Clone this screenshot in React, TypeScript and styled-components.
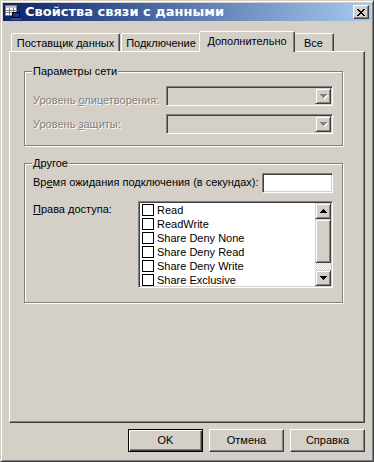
import styled, { createGlobalStyle } from "styled-components";

const FACE = "#d4d0c8";
const SHADOW = "#808080";
const DARK = "#404040";

const GlobalStyle = createGlobalStyle`
  html, body {
    margin: 0;
    padding: 0;
    background: ${FACE};
  }
  body {
    font-family: "Liberation Sans", Arial, sans-serif;
    font-size: 11px;
    line-height: 13px;
    color: #000;
  }
  * {
    box-sizing: border-box;
  }
`;

const TABS = [
  { label: "Поставщик данных", width: 109, gap: 1 },
  { label: "Подключение", width: 80, gap: 0 },
  { label: "Дополнительно", width: 96, gap: -2, active: true },
  { label: "Все", width: 41, gap: 0 },
];

const RIGHTS = [
  "Read",
  "ReadWrite",
  "Share Deny None",
  "Share Deny Read",
  "Share Deny Write",
  "Share Exclusive",
];

const DOWN = "M0 0h7v1H0zM1 1h5v1H1zM2 2h3v1H2zM3 3h1v1H3z";
const UP = "M3 0h1v1H3zM2 1h3v1H2zM1 2h5v1H1zM0 3h7v1H0z";

const TitleIcon = () => (
  <svg width="16" height="16" viewBox="0 0 16 16" shapeRendering="crispEdges">
    <rect x="0" y="1" width="12" height="11" fill="#808080" />
    <rect x="1" y="2" width="10" height="9" fill="#fff" />
    <rect x="1" y="2" width="10" height="2" fill="#c0c0c0" />
    <path d="M1 6h10M1 8h10M4 4v7M8 4v7" stroke="#808080" />
    <rect x="7" y="8" width="8" height="6" fill="#000" />
    <rect x="8" y="9" width="6" height="4" fill="#1030c0" />
    <rect x="6" y="14" width="10" height="2" fill="#505050" />
  </svg>
);

const CloseGlyph = () => (
  <svg width="8" height="7" viewBox="0 0 8 7" shapeRendering="crispEdges">
    <path
      d="M0 0h2v1h1v1h2V1h1V0h2v1H7v1H6v1H5v1h1v1h1v1h1v1H6V6H5V5H3v1H2v1H0V6h1V5h1V4h1V3H2V2H1V1H0z"
      fill="#000"
    />
  </svg>
);

const Arrow = ({ up }: { up?: boolean }) => (
  <svg width="7" height="4" viewBox="0 0 7 4" shapeRendering="crispEdges">
    <path d={up ? UP : DOWN} fill="#000" />
  </svg>
);

// greyed-out arrow: white copy shifted by one pixel under a grey one
const DisabledArrow = () => (
  <svg width="8" height="5" viewBox="0 0 8 5" shapeRendering="crispEdges">
    <path d={DOWN} fill="#fff" transform="translate(1 1)" />
    <path d={DOWN} fill={SHADOW} />
  </svg>
);

const App = () => {
  return (
    <>
      <GlobalStyle />
      <Window>
        <TitleBar>
          <TitleIcon />
          <TitleText>Свойства связи с данными</TitleText>
          <CloseButton>
            <CloseGlyph />
          </CloseButton>
        </TitleBar>

        <Body>
          <TabStrip>
            {TABS.map((t) => (
              <Tab key={t.label} $width={t.width} $gap={t.gap} $active={t.active}>
                {t.label}
              </Tab>
            ))}
          </TabStrip>

          <Panel>
            <Group $height={75}>
              <Caption>Параметры сети</Caption>
              <Row $mt={8}>
                <Label $width={133} $dy={8} $disabled>
                  Уровень <u>о</u>лицетворения:
                </Label>
                <Combo>
                  <DropButton>
                    <DisabledArrow />
                  </DropButton>
                </Combo>
              </Row>
              <Row $mt={7}>
                <Label $width={133} $dy={4} $disabled>
                  Уровень <u>з</u>ащиты:
                </Label>
                <Combo>
                  <DropButton>
                    <DisabledArrow />
                  </DropButton>
                </Combo>
              </Row>
            </Group>

            <Group $height={140} $mt={17}>
              <Caption>Другое</Caption>
              <Row $mt={3}>
                <Label $dy={3}>
                  Вр<u>е</u>мя ожидания подключения (в секундах):
                </Label>
                <TextBox />
              </Row>
              <Row $mt={8}>
                <Label $width={105} $dy={2}>
                  <u>П</u>рава доступа:
                </Label>
                <ListBox>
                  <Items>
                    {RIGHTS.map((r) => (
                      <Item key={r}>
                        <CheckBox />
                        {r}
                      </Item>
                    ))}
                  </Items>
                  <ScrollBar>
                    <ScrollButton>
                      <Arrow up />
                    </ScrollButton>
                    <Thumb />
                    <Track />
                    <ScrollButton>
                      <Arrow />
                    </ScrollButton>
                  </ScrollBar>
                </ListBox>
              </Row>
            </Group>
          </Panel>

          <ButtonRow>
            <PushButton $default>OK</PushButton>
            <PushButton>Отмена</PushButton>
            <PushButton>Справка</PushButton>
          </ButtonRow>
        </Body>
      </Window>
    </>
  );
};

const Window = styled.div`
  width: 374px;
  height: 462px;
  display: flex;
  flex-direction: column;
  padding: 2px;
  background: ${FACE};
  border: 1px solid;
  border-color: ${FACE} ${DARK} ${DARK} ${FACE};
  box-shadow: inset 1px 1px 0 #fff, inset -1px -1px 0 ${SHADOW};
`;

const TitleBar = styled.div`
  height: 18px;
  flex-shrink: 0;
  display: flex;
  align-items: center;
  padding: 0 2px;
  background: linear-gradient(to right, #0a246a, #a6caf0);
`;

const TitleText = styled.div`
  flex: 1;
  margin-left: 4px;
  font-family: "DejaVu Sans", Verdana, sans-serif;
  font-weight: 700;
  font-size: 13px;
  line-height: 16px;
  color: #fff;
  white-space: nowrap;
`;

const CloseButton = styled.div`
  width: 16px;
  height: 14px;
  display: flex;
  align-items: center;
  justify-content: center;
  background: ${FACE};
  border: 1px solid;
  border-color: #fff ${DARK} ${DARK} #fff;
  box-shadow: inset -1px -1px 0 ${SHADOW};
`;

const Body = styled.div`
  flex: 1;
  display: flex;
  flex-direction: column;
  padding: 10px 6px 7px;
`;

const TabStrip = styled.div`
  height: 20px;
  flex-shrink: 0;
  display: flex;
  align-items: flex-end;
  padding-left: 2px;
`;

const Tab = styled.div<{ $width: number; $gap: number; $active?: boolean }>`
  position: relative;
  z-index: ${({ $active }) => ($active ? 1 : 0)};
  width: ${({ $width }) => $width}px;
  height: ${({ $active }) => ($active ? 21 : 18)}px;
  margin: 0 ${({ $gap }) => $gap}px ${({ $active }) => ($active ? -1 : 0)}px
    ${({ $active }) => ($active ? -2 : 0)}px;
  padding-top: 3px;
  text-align: center;
  white-space: nowrap;
  background: ${FACE};
  border: 1px solid;
  border-bottom: none;
  border-color: #fff ${DARK} transparent #fff;
  border-radius: 2px 2px 0 0;
  box-shadow: inset -1px 0 0 ${SHADOW};
`;

const Panel = styled.div`
  flex: 1;
  display: flex;
  flex-direction: column;
  align-items: flex-start;
  padding: 19px 0 0 14px;
  border: 1px solid;
  border-color: #fff ${DARK} ${DARK} #fff;
  box-shadow: inset -1px -1px 0 ${SHADOW};
`;

const Group = styled.div<{ $height: number; $mt?: number }>`
  width: 319px;
  height: ${({ $height }) => $height}px;
  margin-top: ${({ $mt }) => $mt ?? 0}px;
  display: flex;
  flex-direction: column;
  padding: 0 9px 0 8px;
  border: 1px solid ${SHADOW};
  box-shadow: inset 1px 1px 0 #fff, 1px 1px 0 #fff;
`;

const Caption = styled.div`
  align-self: flex-start;
  margin: -7px 0 0 -1px;
  padding: 0 1px;
  background: ${FACE};
`;

const Row = styled.div<{ $mt: number }>`
  display: flex;
  align-items: flex-start;
  margin-top: ${({ $mt }) => $mt}px;
`;

const Label = styled.span<{ $width?: number; $dy: number; $disabled?: boolean }>`
  ${({ $width }) => ($width ? `width: ${$width}px; flex-shrink: 0;` : "")}
  padding-top: ${({ $dy }) => $dy}px;
  white-space: nowrap;
  color: ${({ $disabled }) => ($disabled ? SHADOW : "#000")};
  text-shadow: ${({ $disabled }) => ($disabled ? "1px 1px 0 #fff" : "none")};
`;

const Sunken = styled.div`
  border: 1px solid;
  border-color: ${SHADOW} #fff #fff ${SHADOW};
  box-shadow: inset 1px 1px 0 ${DARK}, inset -1px -1px 0 ${FACE};
  padding: 1px;
`;

const Combo = styled(Sunken)`
  width: 167px;
  height: 20px;
  display: flex;
  justify-content: flex-end;
  background: ${FACE};
`;

const Raised = styled.div`
  display: flex;
  align-items: center;
  justify-content: center;
  background: ${FACE};
  border: 1px solid;
  border-color: ${FACE} ${DARK} ${DARK} ${FACE};
  box-shadow: inset 1px 1px 0 #fff, inset -1px -1px 0 ${SHADOW};
`;

const DropButton = styled(Raised)`
  width: 16px;
  height: 16px;
  padding: 1px 0 0 1px;
`;

const TextBox = styled(Sunken)`
  width: 71px;
  height: 20px;
  margin-left: auto;
  background: #fff;
`;

const ListBox = styled(Sunken)`
  width: 196px;
  height: 87px;
  display: flex;
  background: #fff;
`;

const Items = styled.div`
  flex: 1;
  display: flex;
  flex-direction: column;
  overflow: hidden;
`;

const Item = styled.div`
  height: 14px;
  flex-shrink: 0;
  display: flex;
  align-items: center;
  padding-left: 2px;
  line-height: 14px;
  white-space: nowrap;
`;

const CheckBox = styled.span`
  width: 12px;
  height: 12px;
  margin-right: 3px;
  border: 1px solid #000;
  background: #fff;
`;

const ScrollBar = styled.div`
  width: 16px;
  display: flex;
  flex-direction: column;
`;

const ScrollButton = styled(Raised)`
  height: 16px;
  flex-shrink: 0;
`;

const Thumb = styled(Raised)`
  height: 44px;
  flex-shrink: 0;
`;

const Track = styled.div`
  flex: 1;
  background-color: #fff;
  background-image: conic-gradient(${FACE} 25%, #fff 0 50%, ${FACE} 0 75%, #fff 0);
  background-size: 2px 2px;
`;

const ButtonRow = styled.div`
  display: flex;
  justify-content: flex-end;
  gap: 6px;
  margin-top: 6px;
`;

const PushButton = styled.button<{ $default?: boolean }>`
  width: 75px;
  height: 23px;
  padding: 0;
  font: inherit;
  color: #000;
  background: ${FACE};
  border: 1px solid;
  border-color: ${({ $default }) => ($default ? "#000" : `#fff ${DARK} ${DARK} #fff`)};
  box-shadow: ${({ $default }) =>
    $default
      ? `inset 1px 1px 0 #fff, inset -1px -1px 0 ${DARK}, inset -2px -2px 0 ${SHADOW}`
      : `inset -1px -1px 0 ${SHADOW}`};
`;

export default App;
